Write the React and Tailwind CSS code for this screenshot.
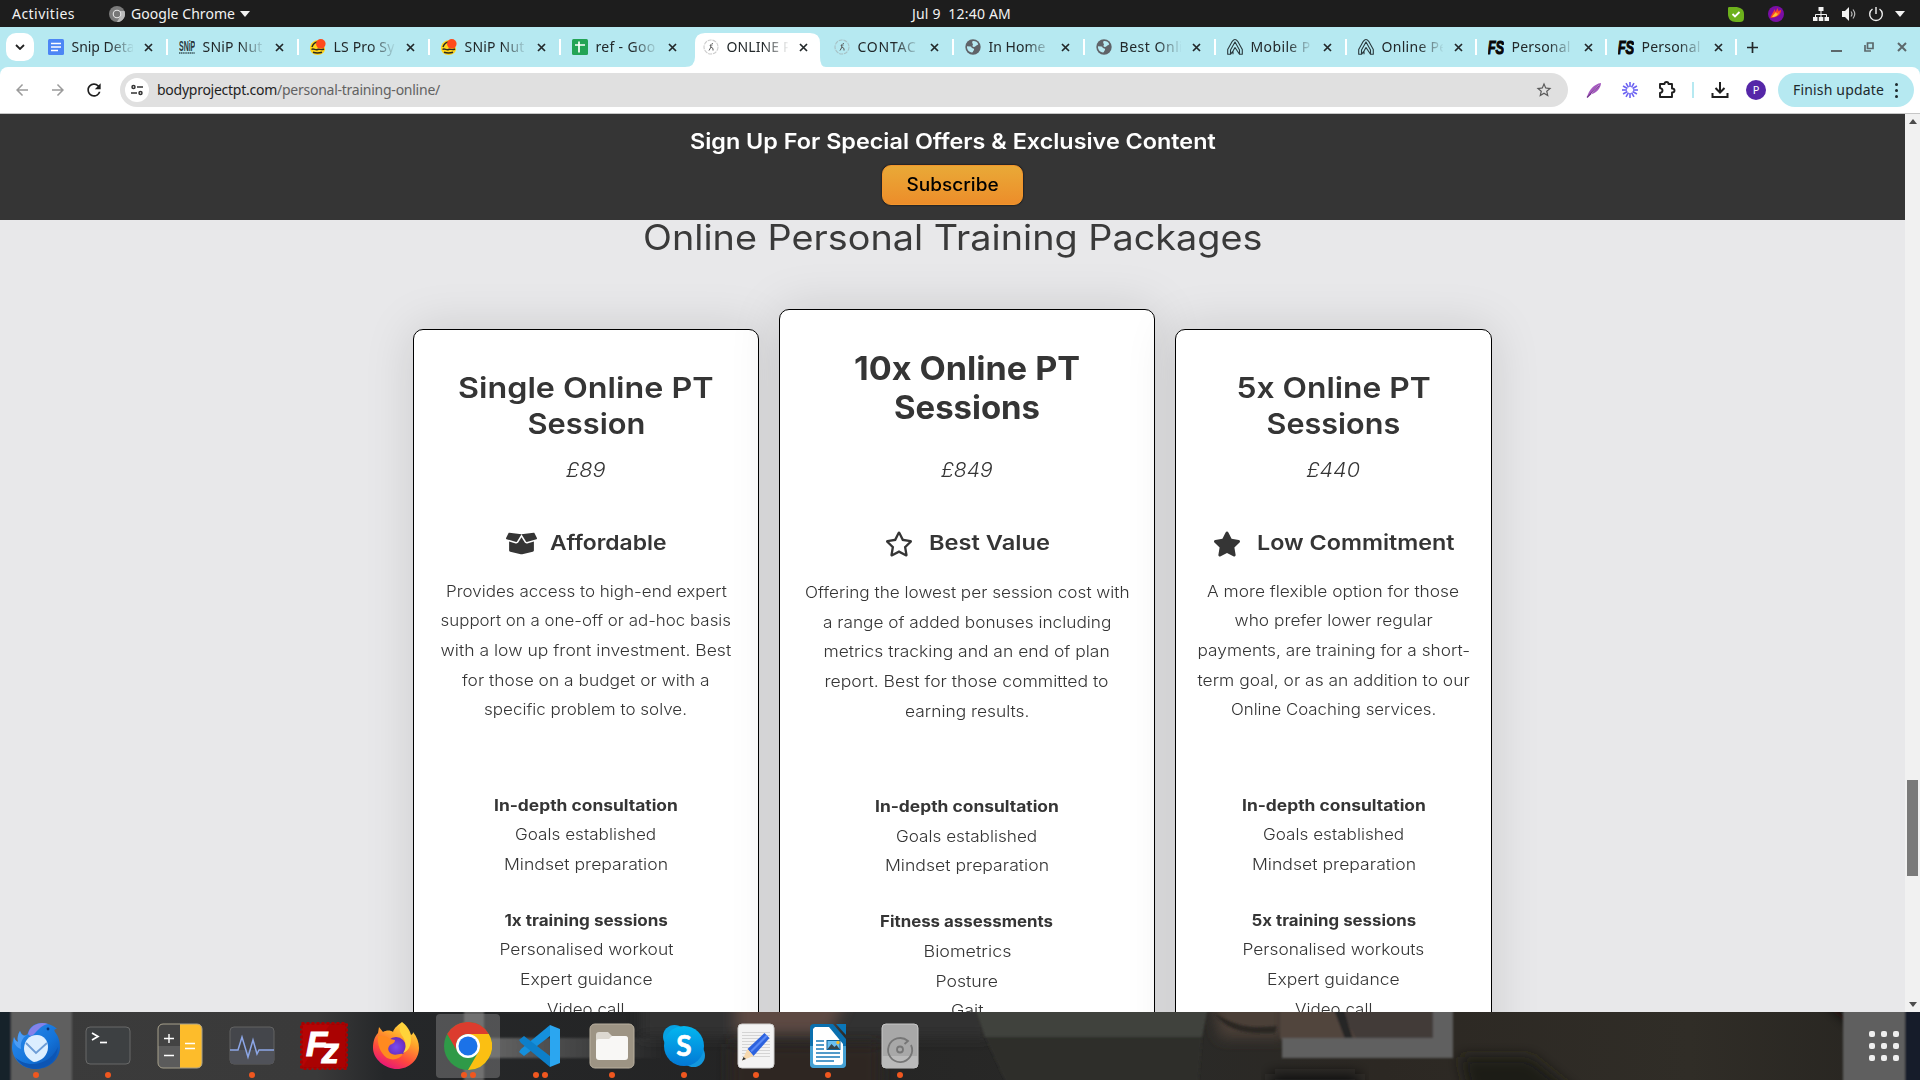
import React, { useLayoutEffect, useRef, useState } from "react";
import { FaBoxOpen, FaRegStar, FaStar } from "react-icons/fa";
import { MdOutlineStarBorder, MdOutlineExtension, MdRefresh, MdArrowBack, MdArrowForward } from "react-icons/md";

/* Single line of text whose tracking is adjusted so that it spans `w` pixels. */
function Fit({ w, className = "", children }) {
  const ref = useRef(null);
  const [spacing, setSpacing] = useState(0);
  useLayoutEffect(() => {
    const natural = ref.current.getBoundingClientRect().width;
    setSpacing((w - natural) / children.length);
  }, [w, children]);
  return (
    <span ref={ref} className={`inline-block whitespace-pre ${className}`} style={{ letterSpacing: `${spacing}px` }}>
      {children}
    </span>
  );
}

/* Single line of text whose letters are widened so that it spans `w` pixels. */
function Wide({ w, children }) {
  const ref = useRef(null);
  const [scale, setScale] = useState(1);
  useLayoutEffect(() => {
    setScale(w / ref.current.offsetWidth);
  }, [w, children]);
  return (
    <span className="inline-flex justify-center" style={{ width: `${w}px` }}>
      <span ref={ref} className="shrink-0 whitespace-pre" style={{ transform: `scaleX(${scale})` }}>
        {children}
      </span>
    </span>
  );
}

/* ---------- Desktop top bar ---------- */

function TopBar() {
  return (
    <div className="grid h-[27px] grid-cols-[1fr_98px_1fr] items-center bg-[#1d1d1d] text-[14px] leading-[26px] text-[#f2f2f2]">
      <div className="flex items-center pl-3">
        <Fit w={63}>Activities</Fit>
        <svg className="ml-[34px] h-4 w-4" viewBox="0 0 16 16">
          <circle cx="8" cy="8" r="8" fill="#7b7b7b" />
          <path d="M15.5 5H8l3.5 5-3.600 6A8 8 0 0 0 15.500 5Z" fill="#b9b9b9" />
          <circle cx="8" cy="8" r="4.300" fill="#e6e6e6" />
          <circle cx="8" cy="8" r="3.200" fill="#777" />
        </svg>
        <Fit w={110} className="pl-1.5">Google Chrome</Fit>
        <svg className="ml-[5px] h-2 w-[10px]" viewBox="0 0 10 8"><path d="M0 1h10L5 7Z" fill="#f2f2f2" /></svg>
      </div>
      <div className="pl-[1px]"><Fit w={99}>{"Jul 9  12:40 AM"}</Fit></div>
      <div className="flex items-center justify-end pr-[15px]">
        <svg className="h-4 w-4" viewBox="0 0 16 16">
          <path d="M1 1h6c5 0 9 2 9 7v4c0 3-2 4-4 4H8C3 16 0 13 0 8V3c0-1 0-2 1-2Z" fill="#6db11c" />
          <path d="m4.500 8 2.500 2.500L11.500 6" fill="none" stroke="#fff" strokeWidth="1.800" />
        </svg>
        <svg className="ml-6 h-4 w-4" viewBox="0 0 16 16">
          <circle cx="8" cy="8" r="8" fill="#7b0ea5" />
          <path d="M2.500 12c0-3 3-5 4-9l1 3 2-4 1 3 2.500-1c0 5-4 8-10.500 8Z" fill="#f9402c" />
          <path d="M4 11c1-2 3-4 4-5l1 2 2-2c-1 3-3 5-7 5Z" fill="#fec42c" />
        </svg>
        <svg className="ml-[29px] h-4 w-4" viewBox="0 0 16 16" fill="#f2f2f2">
          <path d="M5.500 1h5v4h-5zM0 11h4.500v4H0zM5.800 11h4.500v4H5.800zM11.500 11H16v4h-4.500z" />
          <path d="M8 5v6M2.500 11V8.500h11V11" stroke="#f2f2f2" fill="none" />
        </svg>
        <svg className="ml-[12px] h-4 w-4" viewBox="0 0 16 16" fill="#f2f2f2">
          <path d="M1 5h3l4-4v14l-4-4H1Z" />
          <path d="M10 5.500q2 2.500 0 5M12 3.500q3.500 4.500 0 9" stroke="#bbb" fill="none" strokeWidth="1.200" />
        </svg>
        <svg className="ml-[11px] h-4 w-4" viewBox="0 0 16 16" fill="none" stroke="#f2f2f2" strokeWidth="1.400">
          <path d="M8 1v7M4.500 3a6.300 6.300 0 1 0 7 0" />
        </svg>
        <svg className="ml-[11px] h-2 w-[10px]" viewBox="0 0 10 8"><path d="M0 1h10L5 7Z" fill="#f2f2f2" /></svg>
      </div>
    </div>
  );
}

/* ---------- Tab strip ---------- */

const DocsIcon = () => (
  <svg className="h-4 w-4" viewBox="0 0 16 16">
    <rect width="16" height="16" rx="1.500" fill="#4c86f5" />
    <path d="M3 4.500h10M3 8h10M3 11.500h7" stroke="#fff" strokeWidth="1.600" />
  </svg>
);
const SheetsIcon = () => (
  <svg className="h-4 w-4" viewBox="0 0 16 16">
    <rect width="16" height="16" rx="1.500" fill="#23a455" />
    <path d="M3 6h10M7 2.500v11" stroke="#fff" strokeWidth="1.700" />
  </svg>
);
const SnipIcon = () => (
  <svg className="h-4 w-4" viewBox="0 0 16 16">
    <text x="0" y="11.500" transform="scale(.48 1)" fontSize="14.500" fontWeight="700" fill="#29383c" fontFamily="Liberation Sans, sans-serif">SNiP</text>
    <path d="M0 14h16" stroke="#597a80" strokeWidth="2" strokeDasharray="1.300 .5" />
  </svg>
);
const BurgerIcon = () => (
  <svg className="h-4 w-4" viewBox="0 0 16 16">
    <path d="M0 9C0 4 4 1 9 1l6 8c.5 4-3 7-7.500 7S0 13 0 9Z" fill="#ffd51a" />
    <path d="M1.500 10.500c2-1.500 4 1 6 0s4 1 6.500-.5M3 13.300q4.500 1.500 9 0M2 8c1-3 3-4.500 5-5" fill="none" stroke="#2c2a20" strokeWidth="1.500" />
    <circle cx="10.800" cy="4.800" r="4.800" fill="#ff4a1c" />
  </svg>
);
const BadgeIcon = () => (
  <svg className="h-4 w-4" viewBox="0 0 16 16">
    <circle cx="8" cy="8" r="7" fill="none" stroke="#999" strokeOpacity=".5" strokeWidth="1.100" strokeDasharray="4 .9" />
    <path d="m6 11.500 2-3.500-1-2h2.500M8 8l2 1.500v2M9.300 4v1" fill="none" stroke="#555" strokeWidth="1" />
  </svg>
);
const GlobeIcon = () => (
  <svg className="h-4 w-4" viewBox="0 0 16 16">
    <circle cx="8" cy="8" r="7.700" fill="#5f6368" />
    <path d="M7.500 2.200c2.500-.4 5 .8 5.700 3-.8 1.500-2 .8-2.700 2-.8 1-2.700.8-3 0-.3-1 1-1.500.2-2.500-.5-.7-.8-1.500-.2-2.500ZM2 7.300l3.500.2c1.200.3 1 1.500 2.200 1.800 1.500.3 1.800 1.300 1 2.300-.8.800-.5 1.700-1.700 2C3.800 13 1.700 10.500 2 7.300Z" fill="#b6e9f1" />
  </svg>
);
const ArchIcon = () => (
  <svg className="h-4 w-4" viewBox="0 0 16 16" fill="none" stroke="#29383c" strokeWidth="1.100" strokeLinejoin="round">
    <path d="M.7 15.300V10.500L5.300 2.300Q8-1.200 10.700 2.300l4.600 8.200v4.800h-2.800V11L8 3 3.500 11v4.300ZM6 15.300V12l-2.500 3.300M6 12l2-3.500 4.500 6.800" />
  </svg>
);
const FsIcon = () => (
  <svg className="h-4 w-4" viewBox="0 0 16 16">
    <text x="-.5" y="14.500" transform="scale(.72 1)" fontSize="18" fontWeight="800" fontStyle="italic" fill="#080808" stroke="#080808" strokeWidth="1" fontFamily="Liberation Sans, sans-serif">FS</text>
  </svg>
);

const TABS = [
  { icon: <DocsIcon />, title: "Snip Deta", w: 63 },
  { icon: <SnipIcon />, title: "SNiP Nut", w: 60 },
  { icon: <BurgerIcon />, title: "LS Pro Sy", w: 61 },
  { icon: <BurgerIcon />, title: "SNiP Nut", w: 60 },
  { icon: <SheetsIcon />, title: "ref - Goo", w: 60, last: true },
  { icon: <BadgeIcon />, title: "ONLINE P", w: 65, active: true, last: true },
  { icon: <BadgeIcon />, title: "CONTAC", w: 59 },
  { icon: <GlobeIcon />, title: "In Home", w: 57 },
  { icon: <GlobeIcon />, title: "Best Onli", w: 64 },
  { icon: <ArchIcon />, title: "Mobile P", w: 60 },
  { icon: <ArchIcon />, title: "Online Pe", w: 66, narrow: true },
  { icon: <FsIcon />, title: "Personal", w: 59, narrow: true },
  { icon: <FsIcon />, title: "Personal", w: 59, narrow: true },
];

function Tab({ icon, title, w, active, last, narrow }) {
  return (
    <div className={`relative flex h-10 shrink-0 items-center ${narrow ? "w-[130px]" : "w-[131px]"}`}>
      {active && (
        <svg className="absolute top-[6px] left-[-7px] h-[34px] w-[141px]" viewBox="0 0 141 34" fill="#fff">
          <path d="M0 34q10 0 10-10V10Q10 0 20 0h105q10 0 10 10v14q0 10 6 10Z" />
        </svg>
      )}
      <div className="relative ml-[11px] flex h-4 w-4">{icon}</div>
      <div className="relative ml-[7.5px] h-6 w-[61px] overflow-hidden text-[14px] leading-[23px] text-[#22282a] [mask-image:linear-gradient(to_right,black_60%,transparent_102%)]">
        <Fit w={w}>{title}</Fit>
      </div>
      <svg className="relative ml-[11.500px] h-[9px] w-[9px]" viewBox="0 0 9 9"><path d="m1 1 7 7M8 1 1 8" stroke="#22282a" strokeWidth="1.700" /></svg>
      {!last && <div className="ml-auto h-4 w-[2px] bg-white" />}
    </div>
  );
}

function TabStrip() {
  return (
    <div className="flex h-10 items-center bg-[#b6e9f1]">
      <div className="ml-[6px] flex h-7 w-7 items-center justify-center rounded-[10px] bg-white">
        <svg className="h-[6px] w-[10px]" viewBox="0 0 10 6"><path d="m1 1 4 4 4-4" fill="none" stroke="#222" strokeWidth="1.800" /></svg>
      </div>
      <div className="ml-[3px] flex">{TABS.map((t, i) => <Tab key={i} {...t} />)}</div>
      <svg className="ml-[10px] h-[11px] w-[11px]" viewBox="0 0 11 11"><path d="M5.500 0v11M0 5.500h11" stroke="#22282a" strokeWidth="1.700" /></svg>
      <div className="ml-auto flex items-center pr-[13px]">
        <svg className="h-3 w-[11px]" viewBox="0 0 11 12"><path d="M0 10h11" stroke="#5c686b" strokeWidth="2" /></svg>
        <svg className="ml-[22px] h-[10px] w-[10px]" viewBox="0 0 10 10" fill="none" stroke="#5c686b" strokeWidth="1.700"><path d="M3.500 1h5.500v5.500H3.500ZM1 3v6h6" /></svg>
        <svg className="ml-[23px] h-[10px] w-[10px]" viewBox="0 0 10 10"><path d="m1 1 8 8M9 1 1 9" stroke="#5c686b" strokeWidth="2" /></svg>
      </div>
    </div>
  );
}

/* ---------- Address bar row ---------- */

function Toolbar() {
  return (
    <div className="bg-[#b6e9f1]">
      <div className="flex h-[47px] items-center rounded-t-[8px] border-b border-[#c6c6c6] bg-white text-[14px]">
        <MdArrowBack className="ml-[13px] h-[18px] w-[18px] text-[#9b9b9b]" />
        <MdArrowForward className="ml-[18px] h-[18px] w-[18px] text-[#9b9b9b]" />
        <MdRefresh className="ml-[17px] h-5 w-5 text-[#1f1f1f]" />
        <div className="ml-4 flex h-[34px] w-[1448px] items-center rounded-full bg-[#e0e0e0]">
          <div className="ml-[5px] flex h-6 w-6 items-center justify-center rounded-full bg-white">
            <svg className="h-3 w-3" viewBox="0 0 12 12" fill="none" stroke="#333" strokeWidth="1.500">
              <circle cx="2.500" cy="3" r="1.500" /><circle cx="9.500" cy="9" r="1.500" /><path d="M6 3h6M0 9h6" />
            </svg>
          </div>
          <div className="mb-[2px] ml-2">
            <Fit w={120} className="text-[#1f1f1f]">bodyprojectpt.com</Fit>
            <Fit w={163} className="text-[#626262]">/personal-training-online/</Fit>
          </div>
          <MdOutlineStarBorder className="mr-[15px] ml-auto h-[18px] w-[18px] text-[#5a5a5a]" />
        </div>
        <svg className="ml-[18px] h-4 w-4" viewBox="0 0 16 16">
          <path d="M1 15C3 8 8 2 15 1c0 5-5 11-11.500 11.500Z" fill="#a65bc0" />
          <path d="m1 15.500 12-12" stroke="#6b2a86" strokeWidth="1.200" /><path d="m5 12 8-9" stroke="#e0bceb" strokeWidth=".7" />
        </svg>
        <svg className="ml-5 h-4 w-4" viewBox="-8 -8 16 16" stroke="#6c63f2" strokeWidth="1.600">
          {[0, 30, 60, 90, 120, 150, 180, 210, 240, 270, 300, 330].map((a) => <path key={a} d="M0-3v-5" transform={`rotate(${a})`} />)}
        </svg>
        <svg className="ml-[20px] h-[18px] w-[18px]" viewBox="0 0 18 18" fill="none" stroke="#1f1f1f" strokeWidth="1.900" strokeLinejoin="round">
          <path d="M2 3h4.500q0-2 2-2t2 2H14v4.500q2.500 0 2.500 2T14 11.500V16H2v-4q2.500-.5 2.500-2.500T2 7Z" />
        </svg>
        <div className="ml-[16px] h-4 w-[2px] bg-[#b6e9f1]" />
        <svg className="ml-[17px] h-[18px] w-[18px]" viewBox="0 0 18 18" fill="none" stroke="#1f1f1f" strokeWidth="2"><path d="M9 1v10M4.500 7 9 11.500 13.500 7M1.500 12v4h15v-4" /></svg>
        <div className="ml-[17px] flex h-5 w-5 items-center justify-center rounded-full bg-[#5527a8] text-[11px] text-white">P</div>
        <div className="ml-3 flex h-[34px] w-[136px] items-center rounded-full bg-[#b6e9f1] text-[#1d2a2d]">
          <Fit w={91} className="mb-[2px] ml-[15px]">Finish update</Fit>
          <div className="ml-[11px] flex flex-col gap-[3px]">
            <i className="h-[3px] w-[3px] rounded-full bg-[#1d2a2d]" /><i className="h-[3px] w-[3px] rounded-full bg-[#1d2a2d]" /><i className="h-[3px] w-[3px] rounded-full bg-[#1d2a2d]" />
          </div>
        </div>
      </div>
    </div>
  );
}

/* ---------- Pricing page ---------- */

const CARDS = [
  {
    box: "mt-5 w-[346px]", titleBox: "mt-[39.5px] text-[29px] leading-[36px] font-semibold", priceBox: "mt-[13.5px]", tagBox: "mt-[42.5px]", bodyBox: "mt-[19px]",
    title: [["Single Online PT", 256], ["Session", 118]],
    price: ["£89", 39],
    Icon: FaBoxOpen, iconBox: "h-[25px] w-[31px] mr-[14px] mt-[2px]", tag: ["Affordable", 116],
    body: [["Provides access to high-end expert", 281], ["support on a one-off or ad-hoc basis", 291], ["with a low up front investment. Best", 291], ["for those on a budget or with a", 248], ["specific problem to solve.", 203]],
    groups: [
      { head: ["In-depth consultation", 184], items: [["Goals established", 141], ["Mindset preparation", 164]] },
      { head: ["1x training sessions", 163], items: [["Personalised workout", 174], ["Expert guidance", 133], ["Video call", 77]] },
    ],
  },
  {
    box: "w-[376px]", titleBox: "mt-[40px] text-[32px] leading-[38.6px] font-bold", priceBox: "mt-[27.8px]", tagBox: "mt-[43.500px]", bodyBox: "mt-[19.500px]",
    title: [["10x Online PT", 226], ["Sessions", 146]],
    price: ["£849", 52],
    Icon: FaRegStar, iconBox: "h-[28px] w-[28px] mr-4 mt-[2px]", tag: ["Best Value", 121],
    body: [["Offering the lowest per session cost with", 325], ["a range of added bonuses including", 288], ["metrics tracking and an end of plan", 286], ["report. Best for those committed to", 284], ["earning results.", 124]],
    groups: [
      { head: ["In-depth consultation", 184], items: [["Goals established", 141], ["Mindset preparation", 164]] },
      { head: ["Fitness assessments", 173], items: [["Biometrics", 88], ["Posture", 63], ["Gait", 33]] },
    ],
  },
  {
    box: "mt-5 w-[317px]", titleBox: "mt-[39.5px] text-[29px] leading-[36px] font-semibold", priceBox: "mt-[13.5px]", tagBox: "mt-[42.5px]", bodyBox: "mt-[19px]",
    title: [["5x Online PT", 194], ["Sessions", 134]],
    price: ["£440", 53],
    Icon: FaStar, iconBox: "h-[28px] w-[28px] mr-4 mt-[2px]", tag: ["Low Commitment", 198],
    body: [["A more flexible option for those", 252], ["who prefer lower regular", 198], ["payments, are training for a short-", 273], ["term goal, or as an addition to our", 272], ["Online Coaching services.", 205]],
    groups: [
      { head: ["In-depth consultation", 184], items: [["Goals established", 141], ["Mindset preparation", 164]] },
      { head: ["5x training sessions", 165], items: [["Personalised workouts", 182], ["Expert guidance", 133], ["Video call", 77]] },
    ],
  },
];

function Lines({ rows }) {
  return rows.map(([t, w]) => (
    <div key={t} className="flex justify-center"><Wide w={w}>{t}</Wide></div>
  ));
}

function Card({ box, titleBox, priceBox, tagBox, bodyBox, title, price, Icon, iconBox, tag, body, groups }) {
  return (
    <div className={`h-[760px] shrink-0 rounded-[10px] border border-black bg-white text-center text-[#353535] shadow-[0_0_50px_rgba(0,0,0,0.13)] ${box}`}>
      <h3 className={titleBox}><Lines rows={title} /></h3>
      <div className={`text-[19.500px] leading-[30px] font-light italic ${priceBox}`}><Lines rows={[price]} /></div>
      <div className={`flex h-[30px] items-center justify-center text-[20.5px] leading-[30px] font-semibold ${tagBox}`}>
        <Icon className={iconBox} />
        <Wide w={tag[1]}>{tag[0]}</Wide>
      </div>
      <div className={`text-[15.7px] leading-[29.7px] font-light ${bodyBox}`}>
        <Lines rows={body} />
        <div className="mt-[65.5px] flex flex-col gap-[26px]">
          {groups.map((g) => (
            <div key={g.head[0]}>
              <div className="font-bold"><Lines rows={[g.head]} /></div>
              <Lines rows={g.items} />
            </div>
          ))}
        </div>
      </div>
    </div>
  );
}

function Page() {
  return (
    <div className="flex h-[898px] overflow-hidden">
      <div className="h-full w-[1905px] overflow-hidden bg-[#e8e8ea] font-['Inter',sans-serif]">
        <div className="flex h-[106px] flex-col items-center bg-[#353535]">
          <div className="mt-[12px] text-[21.500px] leading-[30px] font-semibold text-white"><Wide w={526}>{"Sign Up For Special Offers & Exclusive Content"}</Wide></div>
          <button className="mt-[9px] h-[40px] w-[141px] rounded-[9px] border border-[#f2952c] bg-linear-to-b from-[#e9a937] to-[#ec8d2a] text-[18px] leading-[36px] font-medium text-black shadow-[0_0_2px_#000]"><Wide w={92}>Subscribe</Wide></button>
        </div>
        <h2 className="flex h-[89px] justify-center text-[35px] leading-[35px] text-[#3a3a3a]"><Wide w={619}>Online Personal Training Packages</Wide></h2>
        <div className="flex items-start justify-center gap-5">
          {CARDS.map((c) => <Card key={c.tag[0]} {...c} />)}
        </div>
      </div>
      <div className="flex w-[15px] flex-col items-center bg-[#f1f1f1]">
        <svg className="mt-[5px] h-[5px] w-2" viewBox="0 0 8 5"><path d="M0 5h8L4 0Z" fill="#4c4c4c" /></svg>
        <div className="mt-[656px] h-[96px] w-[11px] bg-[#7a7a7a]" />
        <svg className="mt-auto mb-[5px] h-[5px] w-2" viewBox="0 0 8 5"><path d="M0 0h8L4 5Z" fill="#4c4c4c" /></svg>
      </div>
    </div>
  );
}

/* ---------- Dock ---------- */

const Thunderbird = () => (
  <svg className="h-[54px] w-12" viewBox="0 -3 48 54" preserveAspectRatio="none">
    <defs><linearGradient id="tb" x1="0" y1="0" x2="1" y2="1"><stop stopColor="#2e8ef0" /><stop offset=".6" stopColor="#1373d9" /><stop offset="1" stopColor="#0b4aa6" /></linearGradient></defs>
    <path d="M16 11C18 3 27-1 36 2c3 1 6 2 9 5-3 0-3 1-2 3 4 5 5 10 5 16-1 12-11 21-24 21C10 47 1 38 0 26c0-4 1-8 2-11 1 3 2 4 4 5-1-4 0-8 2-11 2 5 6 6 8 2Z" fill="url(#tb)" />
    <path d="M2 15c1 3 2 4 4 5-1-4 0-8 2-11 1 4 4 6 7 4-5 3-7 8-6 14-5-2-8-6-7-12Z" fill="#4b9cf5" />
    <path d="M16 12C18 3 28-1 36 2c-6 1-9 5-12 8-3 4-6 5-8 2Z" fill="#8582ea" />
    <path d="M3 35c8 8 20 9 30 4 6-3 10-8 13-14-1 12-9 21-22 22C14 47 7 42 3 35Z" fill="#0d55b3" />
    <path d="M12 27c0-8 5-14 13-14 7 0 11 6 11 12 0 8-6 14-14 15-3-1-10-6-10-13Z" fill="#dceeff" />
    <path d="m14 21 10 10 11-10" fill="none" stroke="#6c9cd6" strokeWidth="1.800" /><circle cx="36" cy="7" r="1.400" fill="#0a3275" />
  </svg>
);
const Terminal = () => (
  <svg className="h-12 w-12" viewBox="0 0 48 48">
    <rect x="2" y="5" width="44" height="37" rx="4" fill="#3d4042" stroke="#696969" />
    <path d="m8 11 6 3.500L8 18" fill="none" stroke="#fff" strokeWidth="1.700" /><path d="M16 20.500h7" stroke="#fff" strokeWidth="1.700" />
  </svg>
);
const Calculator = () => (
  <svg className="h-12 w-12" viewBox="0 0 48 48">
    <rect x="2" y="2" width="44" height="44" rx="5" fill="#5b5b5b" />
    <path d="M2 24V7q0-5 5-5h17v22Z" fill="#434343" /><path d="M24 2h17q5 0 5 5v34q0 5-5 5H24Z" fill="#fdbc2b" />
    <rect x="2" y="2" width="44" height="44" rx="5" fill="none" stroke="#a7a18c" />
    <path d="M8 16.500h10M13 12v9M8 33.500h10M29 21.500h10M29 26.500h10" stroke="#fff" strokeWidth="1.400" />
  </svg>
);
const Monitor = () => (
  <svg className="h-12 w-12" viewBox="0 0 48 48">
    <rect x="2" y="5" width="44" height="37" rx="4" fill="#44464b" stroke="#626262" /><path d="M2 28h44v10q0 4-4 4H6q-4 0-4-4Z" fill="#505259" />
    <path d="M2 28h8l4-13 6 20 5-17 4 14 2-4h15" fill="none" stroke="#8ca6e6" strokeWidth="1.500" />
  </svg>
);
const FileZilla = () => (
  <svg className="h-12 w-12" viewBox="0 0 48 48">
    <rect x="1.500" y="1.500" width="45" height="45" fill="#b60404" stroke="#a80000" strokeWidth="3" strokeDasharray="3 2" />
    <path d="M30 2h16v44H2Z" fill="#8f0000" opacity=".3" />
    <text x="6" y="34" fontSize="35" fontWeight="800" fontStyle="italic" fill="#fff" stroke="#fff" fontFamily="Liberation Sans, sans-serif">F<tspan dx="-6" dy="7">z</tspan></text>
  </svg>
);
const Firefox = () => (
  <svg className="h-12 w-12" viewBox="0 0 48 48">
    <defs>
      <linearGradient id="ff" x1=".8" y1="0" x2=".3" y2="1"><stop stopColor="#ffe84a" /><stop offset=".35" stopColor="#ffa42a" /><stop offset=".7" stopColor="#ff4a3c" /><stop offset="1" stopColor="#e5127d" /></linearGradient>
      <radialGradient id="fp"><stop stopColor="#7a4bf0" /><stop offset="1" stopColor="#6a2bb8" /></radialGradient>
    </defs>
    <path d="M30 0c4 3 8 8 9 13 2-1 2-2 2-3 4 5 6 10 6 16 0 12-10 21-22 21S1 37 1 26c0-7 2-12 5-15l1-6 4 5c3-2 8-2 10 0 1-4 5-7 9-10Z" fill="url(#ff)" />
    <circle cx="24" cy="25" r="10" fill="url(#fp)" />
    <path d="M6 14c5-1 9 0 12 3l5 1c0 3-3 4-5 5-3 3-2 7 2 9 4 2 8-1 11 0-3 5-10 7-16 4C8 31 5 22 6 14Z" fill="#ff8a1f" />
    <path d="M30 1c-4 5-2 10 1 14 3 5 4 11 0 16 6-2 8-8 8-14C39 10 34 5 30 1Z" fill="#ffd33a" />
  </svg>
);
const Chrome = () => (
  <svg className="h-12 w-12" viewBox="0 0 48 48">
    <circle cx="24" cy="24" r="24" fill="#2f9a48" />
    <path d="M24 12h20.800A24 24 0 0 1 24 48l10.400-18Z" fill="#fbbf12" />
    <path d="M3.200 12A24 24 0 0 1 44.800 12H24a12 12 0 0 0-10.400 18Z" fill="#dc3c2e" />
    <circle cx="24" cy="24" r="12" fill="#fff" /><circle cx="24" cy="24" r="9.500" fill="#1b72e8" />
  </svg>
);
const Code = () => (
  <svg className="h-12 w-12" viewBox="0 0 48 48">
    <path d="M34 3v11L8 34l-5-4 2-3Z" fill="#1590dc" /><path d="M34 45V34L8 14l-5 4 2 3Z" fill="#0d7fc9" />
    <path d="m34 3 10 4v34l-10 4Z" fill="#2ba6f0" />
  </svg>
);
const Files = () => (
  <svg className="h-12 w-12" viewBox="0 0 48 48">
    <rect x="2" y="2" width="44" height="44" rx="5" fill="#9d9484" stroke="#b9b09f" />
    <path d="M8 20v-7q0-3 3-3h9l4 4h13q3 0 3 3v5H8Z" fill="#dcd8d0" /><path d="M8 20q0-3 3-3h10l3-3h13q3 0 3 3v18q0 3-3 3H11q-3 0-3-3Z" fill="#f8f7f5" />
  </svg>
);
const Skype = () => (
  <svg className="h-12 w-12" viewBox="0 0 48 48">
    <defs><linearGradient id="sk" x1="0" y1="0" x2="0" y2="1"><stop stopColor="#02b7f0" /><stop offset="1" stopColor="#0378d4" /></linearGradient></defs>
    <circle cx="14.500" cy="14.500" r="11.500" fill="#08a1e2" /><circle cx="33.500" cy="33.500" r="11.500" fill="#1397dd" /><circle cx="24" cy="24" r="20" fill="url(#sk)" />
    <text x="24" y="34" fontSize="28" fontWeight="700" textAnchor="middle" fill="#fff" stroke="#fff" strokeWidth=".6" fontFamily="Lato, sans-serif">S</text>
  </svg>
);
const Editor = () => (
  <svg className="h-12 w-12" viewBox="0 0 48 48">
    <rect x="6" y="2" width="36" height="44" rx="4" fill="#f3f3f3" stroke="#cfcfcf" />
    <path d="M10 10.500h28M10 13.500h28M10 16.500h28M10 19.500h28M10 22.500h28M10 25.500h28M10 28.500h28M10 31.500h28M10 34.500h28" stroke="#ccc" strokeWidth=".8" />
    <path d="m15.500 27 17-16 5 5-16 18Z" fill="#2c62de" /><path d="m19 29.500 16-16" stroke="#5b8af5" strokeWidth="2" /><path d="m15.500 27 6 7L10 38.500Z" fill="#f7d9ae" /><path d="m11.500 35 2.500 2-4 1.500Z" fill="#333" />
  </svg>
);
const Writer = () => (
  <svg className="h-12 w-12" viewBox="0 0 48 48">
    <path d="M10 2h19l13 15v25q0 4-4 4H10q-4 0-4-4V6q0-4 4-4Z" fill="#0a6fae" /><path d="M6 24h36v18q0 4-4 4H10q-4 0-4-4Z" fill="#45a1d4" /><path d="M32 2h10v11Z" fill="#0a76b8" />
    <path d="M11 5h14l14 17v18q0 3-3 3H12q-3 0-3-3V7Z" fill="#fff" />
    <path d="M12 19h8M12 23h8M12 27h8M12 31h24M12 35h24M12 39h18" stroke="#1a7ab8" strokeWidth="1.600" />
    <rect x="23" y="18.500" width="13" height="9" fill="#69bff2" stroke="#0d629a" /><path d="m23.500 27 4-5 3 3 2-2 3 4Z" fill="#36454c" /><circle cx="34" cy="20.500" r="1.700" fill="#fbbd27" />
  </svg>
);
const Disk = () => (
  <svg className="h-12 w-12" viewBox="0 0 48 48">
    <rect x="6" y="2" width="36" height="44" rx="4" fill="#a8a8a8" stroke="#c7c7c7" /><path d="M6 34h36v8q0 4-4 4H10q-4 0-4-4Z" fill="#bababa" />
    <path d="M35 23a12 12 0 1 1-3-4l-3.500 3" fill="none" stroke="#767676" strokeWidth="1.800" /><circle cx="24" cy="27.500" r="3" fill="none" stroke="#767676" strokeWidth="1.800" />
  </svg>
);

const DOCK = [
  [Thunderbird, 1], [Terminal, 1], [Calculator, 0], [Monitor, 1], [FileZilla, 0], [Firefox, 0], [Chrome, 2], [Code, 2], [Files, 1], [Skype, 1], [Editor, 1], [Writer, 1], [Disk, 1],
];

/* Blurred desktop wallpaper that shows through the dock. */
function Wallpaper() {
  return (
    <svg className="absolute inset-0 h-[68px] w-[1920px]" viewBox="0 0 1920 68">
      <defs>
        <filter id="b1" x="-5%" y="-40%" width="110%" height="180%"><feGaussianBlur stdDeviation="1.200" /></filter>
        <filter id="b2" x="-10%" y="-60%" width="120%" height="220%"><feGaussianBlur stdDeviation="7" /></filter>
        <linearGradient id="w1"><stop stopColor="#3b3b3b" /><stop offset=".165" stopColor="#3a3a3a" /><stop offset=".2" stopColor="#252729" /><stop offset=".4" stopColor="#242424" /><stop offset=".6" stopColor="#2a2a28" /><stop offset=".72" stopColor="#2c2823" /><stop offset=".88" stopColor="#302d27" /><stop offset="1" stopColor="#262420" /></linearGradient>
        <linearGradient id="w2"><stop stopColor="#666" /><stop offset="1" stopColor="#666" stopOpacity="0" /></linearGradient>
      </defs>
      <rect width="1920" height="68" fill="url(#w1)" />
      <path d="M640-20h350v45H640Z" fill="#333233" filter="url(#b2)" />
      <path d="M735-20h115l-20 42h-95Z" fill="#5d4a42" filter="url(#b2)" />
      <path d="M730 32h150v60H730Z" fill="#2f2521" filter="url(#b2)" />
      <path d="M1210-20h75v46h-65Z" fill="#4b3f37" filter="url(#b2)" />
      <path d="M1460 45h70l50 40h-110Z" fill="#1a1a19" filter="url(#b2)" />
      <path d="M1270 62h90v40h-90Z" fill="#181615" filter="url(#b2)" />
      <path d="M1815-20h60v50Z" fill="#12110f" filter="url(#b2)" />
      <g filter="url(#b1)">
        <path d="M975-5h233l-6 30H985Z" fill="#40423d" /><path d="M985 25h217l-4 50h-190Z" fill="#2d2e2b" />
        <path d="M1215 2c20 10 30 16 62 12l-2 7c-30 2-50-4-60-19Z" fill="#2a2624" />
        <path d="M1280-5h155v32h-155Z" fill="#51443c" /><path d="M1340-5h93v32h-77Z" fill="#423b38" /><path d="M1333-5h10l10 32h-8Z" fill="#282828" />
        <path d="M1282 26h151V-5h20v51h-171Z" fill="#606060" />
        <path d="M464-5h20v75h-20Z" fill="#5d5d5d" /><path d="M484 26h180v20H484Z" fill="url(#w2)" />
        <path d="M11-5h61v80H11Z" fill="#5e5e5e" /><path d="M-5-5h16v80H-5Z" fill="#18212b" />
        <path d="M1843-5h62v80h-62Z" fill="#5f5f5f" /><path d="M1905-5h20v80h-20Z" fill="#171d2a" />
      </g>
    </svg>
  );
}

function Dock() {
  return (
    <div className="relative h-[68px] overflow-hidden">
      <Wallpaper />
      <div className="relative flex h-full items-start">
        {DOCK.map(([Icon, dots], i) => (
          <div key={i} className="flex w-[72px] justify-center pt-[2px]">
            <div className={`flex h-16 w-16 flex-col items-center rounded-[4px] pt-2 ${i === 6 ? "bg-[#8a8a8a]/45" : ""}`}>
              <div className="flex h-12 items-center"><Icon /></div>
              <div className="mt-[2px] flex gap-[3px]">
                {Array.from({ length: dots }, (_, d) => <i key={d} className="h-[6px] w-[6px] rounded-full bg-[#f0571f]" />)}
              </div>
            </div>
          </div>
        ))}
        <div className="mt-[19px] mr-[21px] ml-auto grid grid-cols-3 gap-[6px]">
          {Array.from({ length: 9 }, (_, i) => <i key={i} className="h-[6px] w-[6px] rounded-[2px] bg-[#efefef]" />)}
        </div>
      </div>
    </div>
  );
}

export default function App() {
  return (
    <div className="h-[1080px] w-[1920px] overflow-hidden font-['Noto_Sans',sans-serif]">
      <TopBar />
      <TabStrip />
      <Toolbar />
      <Page />
      <Dock />
    </div>
  );
}
